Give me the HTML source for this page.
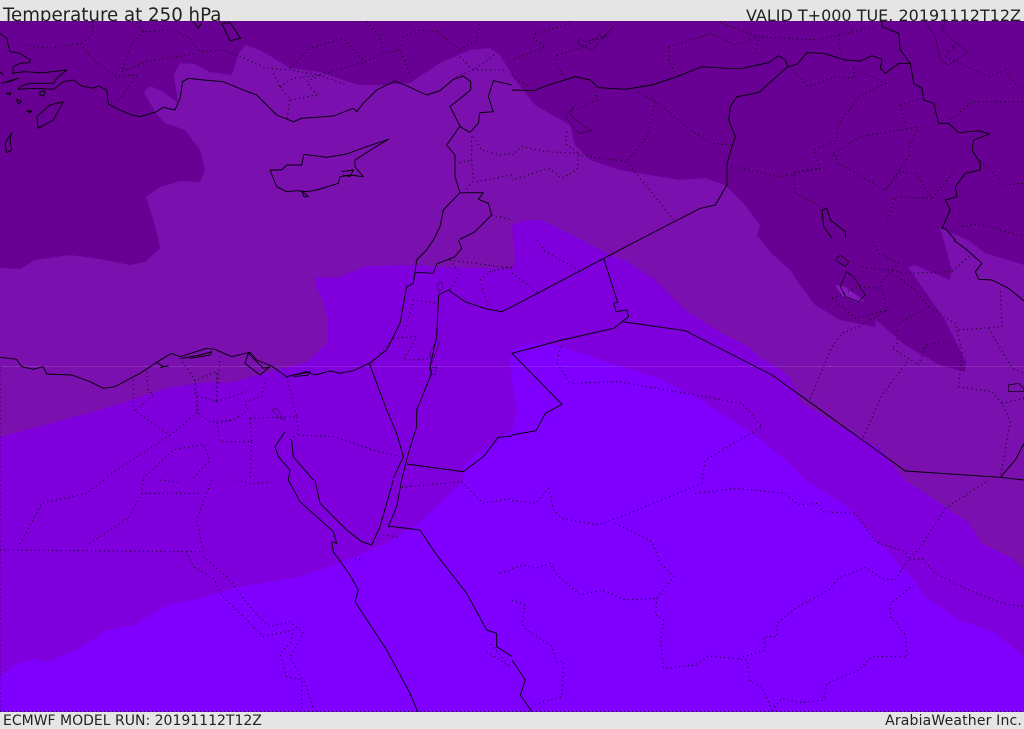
<!DOCTYPE html>
<html><head><meta charset="utf-8"><style>
html,body{margin:0;padding:0;background:#e5e5e5}
#p{position:relative;width:1024px;height:729px;overflow:hidden;background:#e5e5e5;font-family:"DejaVu Sans",sans-serif;color:#222}
.t{position:absolute;white-space:nowrap;line-height:1}
svg{position:absolute;left:0;top:21px}
.s{fill:none;stroke:#000;stroke-width:2.8;stroke-linejoin:round}
.i{fill:none;stroke:#000;stroke-width:1.5;stroke-opacity:.75}
.d{fill:none;stroke:#000;stroke-width:3.2;stroke-dasharray:3 10;stroke-opacity:.9}
</style></head><body><div id="p">
<div class="t" style="left:3px;top:7px;font-size:18.2px">Temperature at 250 hPa</div>
<div class="t" style="right:3px;top:8px;font-size:16px">VALID T+000 TUE. 20191112T12Z</div>
<div class="t" style="left:3px;top:714px;font-size:14px">ECMWF MODEL RUN: 20191112T12Z</div>
<div class="t" style="right:2px;top:714px;font-size:14px;letter-spacing:.17px">ArabiaWeather Inc.</div>
<svg width="1024" height="691" viewBox="0 21 1024 691">
<rect x="0" y="21" width="1024" height="691" fill="#690094"/>
<polygon fill="#7a10ae" points="0,268 20,269 35,260 70,255 100,259 130,265 145,262 160,248 155,225 146,197 160,187 180,181 200,182 205,170 200,150 185,130 165,123 155,112 144,92 150,86 162,91 178,103 174,75 180,63 195,64 210,72 232,75 238,55 245,45 260,50 290,68 320,72 358,85 385,85 410,83 440,63 470,50 490,48 500,55 515,80 535,105 570,125 575,145 590,160 620,170 680,180 705,178 725,185 745,205 760,225 757,235 770,252 790,270 800,285 815,305 840,320 875,327 876,320 905,345 940,365 965,372 966,362 945,320 908,267 915,265 950,280 952,270 940,228 968,240 985,253 1024,265 1024,729 0,729"/>
<polygon fill="#8418bc" points="835,285 845,287 865,301 856,302 842,296"/>
<polygon fill="#7f00dd" points="0,437 100,410 167,388 200,383 233,382 270,372 307,362 327,343 328,320 322,300 315,285 315,277 337,278 367,266 417,265 440,267 512,269 515,262 512,225 525,220 542,220 582,240 609,255 625,260 655,280 685,310 725,335 749,347 759,357 777,367 789,377 802,403 825,417 862,438 879,448 905,480 932,498 968,522 982,543 1012,558 1024,570 1024,729 0,729"/>
<polygon fill="#7f00ff" points="0,677 15,665 33,659 47,662 80,648 107,630 133,626 167,605 200,599 233,588 300,577 340,563 390,542 420,522 440,503 462,483 465,463 490,445 512,430 517,413 512,380 510,360 512,350 529,343 555,345 622,367 662,380 695,397 752,433 789,463 805,480 845,505 879,543 912,578 925,597 959,620 995,633 1024,657 1024,729 0,729"/>
<rect x="0" y="366" width="1024" height="1" fill="#fff" fill-opacity=".12"/>
<path d="M0 21H1024M0 711.5H1024" stroke="#000" stroke-width="1" stroke-dasharray="1 3" stroke-opacity=".7"/>

<g transform="scale(.33333)">
<path class="s" d="M0 100 20 115 30 155 60 160 90 180 90 188 60 190 40 200 38 220 70 215 130 218 200 210 170 235 160 250 90 250 60 260 55 268 100 265 160 268 190 245 220 240 245 258 280 265 295 258 320 270 325 312 360 330 395 345 420 350 470 335 490 322 525 330 540 295 548 245 565 235 610 240 670 245 730 270 770 285 800 315 830 345 880 365 905 355 1000 348 1060 325 1070 335 1090 310 1130 270 1185 243 1215 255 1280 285 1320 272 1360 238 1390 228 1412 245 1412 270 1350 320 1380 378 1340 435 1365 465 1365 530 1380 578 1430 578 1450 578 1435 598 1465 610 1475 645 1425 695 1380 718M1380 380 1410 397 1435 370 1440 338 1480 335 1465 290 1480 242 1536 255M1380 578 1330 630 1320 680 1300 720"/>
<path class="s" d="M810 510 845 510 860 495 905 495 912 463 980 472 1040 462 1100 440 1165 418 1120 445 1065 480 1065 500 1090 530 1050 525 1020 530 1015 550 950 570 920 575 890 572 860 575 830 560 810 510M1025 515 1060 510 1050 530 1030 525M905 572 925 590 912 590Z"/>
<path class="s" d="M190 305 150 315 110 350 115 385 160 360 190 305M35 398 15 430 20 458 35 450 30 420 35 398M120 275 135 272 132 288 120 285ZM50 298 65 305 55 312ZM80 333 95 333 90 338ZM20 280 32 278 30 285ZM0 215 10 225M5 250 55 235 20 248"/>
<path class="s" d="M665 70 690 68 722 115 690 122 665 70M580 65 595 85 605 68"/>
<path class="d" d="M40 72 75 70M75 135 150 145 240 130 280 180 350 230 410 225M280 65 275 110 240 130M410 70 430 95 520 90 570 115 600 155 670 150 720 170 800 205 870 210 960 225 1040 255M395 130 365 215 440 185 590 160M430 95 395 130M410 225 350 310M870 205 930 145 1030 115 1095 185 1150 160 1200 150 1235 235M960 225 1095 185M840 260 880 235 960 225 920 245 950 285 870 300 840 260M820 220 840 260M870 300 860 360M1100 65 1140 110 1150 160M1200 150 1210 110 1260 90 1310 95 1380 150 1430 120 1440 65M1380 170 1420 210 1490 160M1370 230 1420 210 1520 210M1415 410 1415 480 1370 490M1420 410 1445 450 1500 465 1536 460M1415 480 1420 540 1400 570M1430 545 1536 525M1475 645 1536 660"/>
</g>

<g transform="translate(512,0) scale(.33333)">
<path class="s" d="M0 270 65 272 110 255 190 230 235 240 260 263 340 268 420 255 490 232 570 200 640 205 690 205 770 188 800 167 820 180 827 200 855 193 885 158 935 160 1000 180 1045 183 1080 167 1110 178 1105 205 1120 220 1160 190 1195 190 1165 150 1160 100 1110 80 1110 63M1195 190 1205 250 1230 265 1235 300 1265 310 1280 370 1310 370 1340 398 1400 392 1433 402 1385 420 1380 450 1405 490 1405 510 1360 520 1330 560 1335 590 1300 600 1315 630 1290 685 1300 685 1330 720"/>
<path class="s" d="M827 200 740 278 675 290 655 320 650 360 670 410 660 440 645 490 645 555 610 615 565 625 380 720"/>
<path class="i" d="M185 320 160 350 200 400 240 392 215 378 175 345 185 320M305 80 240 150 195 130 205 115 220 125 255 115 260 100 270 115 305 80M1240 65 1270 110 1285 180 1310 195 1370 155 1320 120 1290 85 1300 65M1305 150 1315 155 1310 160ZM1320 138 1330 142 1322 146Z"/>
<path class="s" d="M930 630 945 625 955 660 1000 695 1000 715M930 630 935 680 960 715"/>
<path class="d" d="M70 100 65 115 100 140 0 180M70 100 180 70M135 165 130 190 160 235M135 165 200 145 300 100M0 225 50 260M250 260 255 300 190 330M380 275 430 305 550 400 600 430 660 435M430 305 405 410 345 485 200 465 195 510 150 535 110 505 0 540M345 485 380 530 490 665M200 460 100 455 30 440 0 465M165 395 160 430 200 460M470 140 470 180 490 220M470 140 600 100 670 135 740 110 920 120 980 105 1090 80M980 105 985 165M740 120 725 170M630 70 740 110M830 200 890 260 970 230 1030 235 1025 205 1120 250 1040 290 975 380 975 420 905 450 925 505 845 515 850 580 910 610 935 625M645 495 800 530 925 505M965 460 1045 410 1220 380 1195 430 1190 470 1120 570 980 490 965 460M1165 315 1230 295M1165 315 1180 380M1120 570 1165 515 1210 520 1260 595 1330 510M1260 595 1150 590 1120 680M1300 170 1430 230 1480 210 1510 250 1536 260M1315 360 1380 305 1536 305M1405 480 1480 555 1536 550M1350 680 1400 672 1536 710"/>
</g>

<g transform="translate(0,240) scale(.33333)">
<path class="s" d="M0 352 50 358 65 380 100 388 130 380 140 402 215 405 270 425 310 445 345 440 420 400 470 367 490 380 505 378 480 382M515 340 540 350 620 325 645 328 695 350 750 337 770 360 815 378 860 410 920 395 945 405 990 393 1020 400 1060 392 1108 370 1160 330 1200 250 1220 140 1240 130 1245 97 1300 100 1310 72 1365 50 1385 25 1375 0M1245 97 1250 60 1280 30 1300 0M735 370 745 340 770 365 790 385 810 380 780 405 735 370M545 355 600 345 635 335 630 345 570 355M860 410 930 395 925 405 880 410M470 367 515 340"/>
<path class="s" d="M1316 165 1310 290 1290 380 1295 400 1250 510 1250 560 1225 640 1205 720M1108 370 1160 510 1190 580 1210 650 1180 715M1316 165 1345 150 1395 185 1460 207 1505 215 1536 200M1220 672 1390 695 1450 650 1495 592 1536 588"/>
<path class="i" d="M1310 300 1290 340 1295 370 1318 310ZM1310 135 1325 125 1330 145 1318 155ZM1290 385 1310 380 1305 405 1290 400ZM815 510 830 505 855 540 840 535Z"/>
<path class="s" d="M855 575 825 620 835 650 870 690 865 720M875 600 880 650 940 720"/>
<path class="d" d="M0 380 0 720M400 420 400 510 510 585 595 515 585 420 585 465 650 485 650 395 590 420M440 395 445 450 460 465 400 515M540 355 585 420M660 350 650 485M590 470 590 515 630 545 700 540 745 510 735 485 785 470 800 410M650 485 740 455M750 535 890 530 860 410M750 535 755 605 660 605 650 550 700 540M890 530 895 580 870 600M895 585 1000 590 1120 630 1200 650M755 605 750 715M510 585 320 710M430 715 520 630 610 612 630 660 580 715M1180 295 1250 290 1210 360 1285 358M1215 270 1240 180 1310 190M1115 370 1180 295M1350 60 1380 100 1350 150M1440 120 1470 95 1536 80M1440 120 1465 200M1350 60 1536 85"/>
</g>

<g transform="translate(512,240) scale(.33333)">
<path class="s" d="M380 0 0 200M0 585 72 572 100 520 150 493 0 340 150 300 305 265 350 230 345 210 312 215 305 190 317 187 275 55M330 245 520 272 780 405 1180 693 1465 712 1536 720M1465 712 1510 660 1536 610M1325 0 1365 30 1410 70 1390 95 1400 118 1440 120 1490 145 1536 183"/>
<path class="s" style="stroke-width:2" d="M970 60 985 45 1010 65 1000 80 970 60M1003 95 985 140 1000 170 1040 185 1060 165 1025 110 1003 95M1490 435 1520 430 1536 445 1536 455 1490 455Z"/>
<path class="d" d="M75 0 100 35 200 90M0 100 75 155M145 320 135 370 175 430 320 425 520 460 690 490 750 560 580 660 570 720M895 475 960 320 990 280 1040 260 1125 210 1105 130 1160 70 1100 40 1080 0M960 175 1030 235 1125 210M960 175 1040 140 1110 145M1050 80 1190 100 1320 95 1380 40M1155 110 1210 150 1250 200M1160 250 1250 200 1330 250 1350 330 1340 440 1440 455 1470 490 1495 545 1465 710M1155 270 1155 310 1140 325 1220 375 1240 315 1300 305 1345 320M1185 365 1110 465 1050 600M1340 270 1470 260 1465 150M1430 265 1500 385 1536 400M1470 490 1536 475"/>
</g>

<g transform="translate(0,480) scale(.33333)">
<path class="s" d="M865 0 900 65 1000 155 1010 190 995 185 1000 215 1050 285 1075 330 1065 365 1160 510 1230 640 1253 695M945 0 960 70 1040 150 1085 185 1115 195 1140 140 1180 0M1205 0 1190 80 1165 140 1180 140 1260 150 1310 225 1400 340 1460 450 1490 460 1490 500 1536 530"/>
<path class="d" d="M0 210 610 215 590 120 635 0M430 0 425 40 605 40M425 40 385 115 260 195M310 0 260 40 125 70 55 200M560 215 580 260 640 295 665 345 750 430 790 470 880 450 870 490 840 520 860 590 905 600 905 690M610 230 680 290 770 405 810 440 870 425 910 460 870 530 920 620 940 690M1205 22 1385 5M1385 5 1450 70 1536 55M1150 165 1190 170M1065 235 1085 240M1500 280 1536 270M1460 515 1530 560 1470 490M480 0 540 8M710 0 760 12 810 5M0 0 0 700"/>
</g>

<g transform="translate(512,480) scale(.33333)">
<path class="s" d="M0 540 40 600 25 645 60 695"/>
<path class="d" d="M0 62 70 70 110 25 125 90 150 115 260 135 340 105 470 50 570 10M550 40 670 25 820 40 860 75 920 70 930 95 1030 100 1090 185 1180 215 1190 240 1230 235 1270 280 1380 335 1470 370 1536 380M310 130 420 185 445 250 485 290 435 355 340 360 270 330 205 345 130 280 115 250 70 265 35 255 0 265M435 355 430 405 455 420 445 480 455 565 550 555 590 528 705 540 715 605 750 620 780 690 810 655 860 668 935 660 945 610 1040 570 1080 530 1185 530 1180 465 1135 410 1135 370 1205 315M680 535 760 510 755 470 795 470 795 430 850 385 950 330 980 295 1060 262 1110 295 1150 300 1190 235 1220 210 1300 85 1430 0M0 360 40 375 30 430 45 450 120 500 135 545 155 545 150 650 60 675"/>
</g>
</svg>
</div></body></html>
